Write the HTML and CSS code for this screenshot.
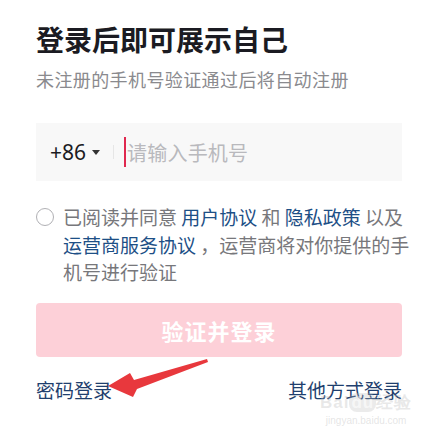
FILE: index.html
```html
<!DOCTYPE html>
<html lang="zh">
<head>
<meta charset="utf-8">
<link rel="stylesheet" href="styles.css">
</head>
<body>
<main class="page">
  <h1 class="title">登录后即可展示自己</h1>
  <p class="subtitle">未注册的手机号验证通过后将自动注册</p>

  <div class="phone-box">
    <span class="code">+86<span class="tri"></span></span>
    <span class="sep"></span>
    <span class="caret"></span>
    <span class="placeholder">请输入手机号</span>
  </div>

  <div class="agree">
    <span class="radio"></span>
    <p class="agree-text"><span class="line">已阅读并同意 <a class="link">用户协议</a> 和 <a class="link">隐私政策</a> 以及</span><span class="line"><a class="link">运营商服务协议</a> ，运营商将对你提供的手</span><span class="line">机号进行验证</span></p>
  </div>

  <button class="submit">验证并登录</button>

  <div class="footer">
    <a class="link foot">密码登录</a>
    <a class="link foot">其他方式登录</a>
  </div>

  <svg class="arrow" width="435" height="439" viewBox="0 0 435 439">
    <polygon points="207,359 134,380 130,373 108,386 133,397 137,389 208,362" fill="#e8383d"/>
  </svg>

  <div class="watermark">
    <div class="wm-logo">Bai<span class="wm-du">du</span>经验</div>
    <div class="wm-url">jingyan.baidu.com</div>
  </div>
</main>
</body>
</html>
```

FILE: styles.css
```css
* { box-sizing: border-box; }
html, body { margin: 0; padding: 0; background: #fff; }
body {
  font-family: "Noto Sans CJK SC", "Noto Sans", sans-serif;
  width: 435px;
  height: 439px;
  overflow: hidden;
}
.page {
  position: relative;
  padding: 21px 33px 0 36px;
  height: 439px;
}
.title {
  margin: 0;
  font-size: 28px;
  line-height: 36px;
  font-weight: 700;
  color: #1b1b22;
}
.subtitle {
  margin: 9px 0 0;
  font-size: 18px;
  line-height: 26px;
  color: #8a8a8e;
  letter-spacing: 0.4px;
}
.phone-box {
  margin-top: 31px;
  height: 58px;
  background: #f8f8f8;
  display: flex;
  align-items: center;
  padding-left: 14px;
}
.code {
  font-family: "Noto Sans", sans-serif;
  font-size: 21px;
  color: #1b1b22;
  display: flex;
  align-items: center;
}
.tri {
  display: inline-block;
  width: 0; height: 0;
  border-left: 4px solid transparent;
  border-right: 4px solid transparent;
  border-top: 5px solid #333;
  margin-left: 6px;
  margin-top: 1px;
}
.sep {
  width: 1px;
  height: 14px;
  background: #e6e6e6;
  margin-left: 13px;
}
.caret {
  width: 2px;
  height: 30px;
  background: #e0284f;
  margin-left: 10px;
}
.placeholder {
  font-size: 20px;
  color: #b9b9bd;
  margin-left: 1px;
  letter-spacing: 0.2px;
}
.agree {
  margin-top: 22px;
  display: flex;
  align-items: flex-start;
}
.radio {
  flex: none;
  width: 18px;
  height: 18px;
  border: 1.5px solid #b0b0b4;
  border-radius: 50%;
  margin-top: 5px;
  margin-right: 9px;
}
.agree-text {
  margin: 0;
  font-size: 19px;
  line-height: 27.5px;
  color: #77777b;
  white-space: nowrap;
}
.line { display: block; }
.link {
  color: #1d4f86;
  text-decoration: none;
}
.submit {
  display: block;
  margin-top: 17px;
  width: 100%;
  height: 54px;
  border: none;
  border-radius: 4px;
  background: #fdd0d8;
  color: #fff;
  font-family: "Noto Sans CJK SC", sans-serif;
  font-size: 22px;
  font-weight: 700;
  letter-spacing: 1px;
}
.footer {
  margin-top: 19px;
  display: flex;
  justify-content: space-between;
}
.foot {
  font-size: 19px;
  line-height: 28px;
  color: #1f3f6e;
}
.arrow {
  position: absolute;
  left: 0;
  top: 0;
  pointer-events: none;
}
.watermark {
  position: absolute;
  left: 320px;
  top: 394px;
  text-align: center;
  pointer-events: none;
}
.wm-logo {
  font-family: "Liberation Sans", sans-serif;
  font-size: 17px;
  font-weight: 700;
  line-height: 18px;
  letter-spacing: 1px;
  color: rgba(190, 190, 190, 0.35);
}
.wm-du {
  background: rgba(190, 190, 190, 0.3);
  color: rgba(255, 255, 255, 0.6);
  border-radius: 8px;
  padding: 0 2px;
}
.wm-url {
  font-family: "Liberation Sans", sans-serif;
  font-size: 10px;
  color: rgba(190, 190, 190, 0.4);
  margin-top: 3px;
}
```
